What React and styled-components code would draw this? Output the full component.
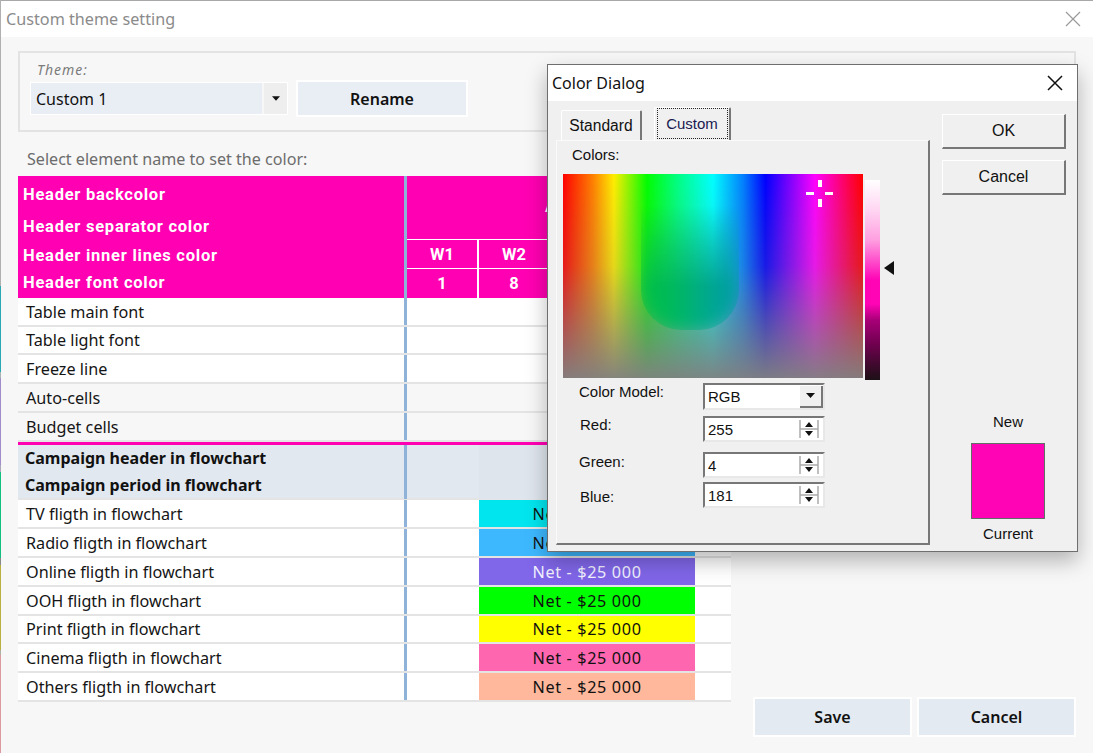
import React from "react";
import styled, { createGlobalStyle } from "styled-components";

const GlobalStyle = createGlobalStyle`
  html, body {
    margin: 0;
    padding: 0;
    background: #f7f7f7;
    overflow: hidden;
  }
  * {
    box-sizing: border-box;
  }
`;

const UI_FONT = `"Noto Sans", "Open Sans", sans-serif`;
const WIN_FONT = `"Liberation Sans", Arial, sans-serif`;

// Main window
const Page = styled.div`
  position: relative;
  display: flex;
  width: 1093px;
  height: 753px;
  background: #f7f7f7;
  font-family: ${UI_FONT};
  overflow: hidden;
`;

const EdgeStrip = styled.div`
  display: flex;
  flex-direction: column;
  width: 1px;
  height: 100%;
`;

const EdgeSegment = styled.div`
  height: ${(props) => props.$h}px;
  background: ${(props) => props.$color};
`;

const Window = styled.div`
  flex: 1;
  display: flex;
  flex-direction: column;
  min-width: 0;
`;

const TitleBar = styled.div`
  display: flex;
  align-items: center;
  justify-content: space-between;
  height: 37px;
  padding: 0 12px 0 5px;
  background: #fff;
  border-top: 1px solid #a8a8a8;
  color: #8b8b8b;
  font-size: 16.2px;
`;

const Body = styled.div`
  flex: 1;
  padding: 14px 17px 16px 17px;
  display: flex;
  flex-direction: column;
`;

const ThemeGroup = styled.div`
  height: 81px;
  border: 2px solid #e3e3e3;
  padding: 8px 0 0 10px;
`;

const ThemeLabel = styled.div`
  margin-left: 7px;
  font-size: 14px;
  line-height: 18px;
  font-style: italic;
  letter-spacing: 1px;
  color: #7c7c7c;
`;

const ThemeControls = styled.div`
  display: flex;
  align-items: center;
  gap: 8px;
  margin-top: 1px;
`;

const Combo = styled.div`
  display: flex;
  gap: 2px;
  width: 258px;
  height: 33px;
  border: 1px solid #fff;
`;

const ComboValue = styled.div`
  flex: 1;
  display: flex;
  align-items: center;
  padding-left: 5px;
  background: #e9eef5;
  color: #111;
  font-size: 16px;
`;

const ComboArrow = styled.div`
  display: flex;
  align-items: center;
  justify-content: center;
  width: 23px;
  background: #eeeeee;
`;

const FlatButton = styled.div`
  display: flex;
  align-items: center;
  justify-content: center;
  width: ${(props) => props.$w}px;
  height: ${(props) => props.$h}px;
  background: ${(props) => props.$bg};
  border: 2px solid #fff;
  color: #111;
  font-size: 16px;
  font-weight: 600;
`;

const Caption = styled.div`
  height: 44px;
  padding: 15px 0 0 9px;
  font-size: 16.1px;
  line-height: 24px;
  color: #6c6c6c;
`;

const BottomArea = styled.div`
  display: flex;
  align-items: flex-end;
  justify-content: space-between;
`;

const Actions = styled.div`
  display: flex;
  gap: 5px;
`;

// Table
const Table = styled.div`
  width: 713px;
  margin-bottom: 35px;
`;

const Header = styled.div`
  display: grid;
  grid-template-columns: 386px 3px 1fr;
  height: 122px;
  background: #ff00b2;
  color: #fff;
`;

const HeaderNames = styled.div`
  display: grid;
  grid-template-rows: 36px 28px 30px 24px;
  padding-left: 5px;
  font-family: Roboto, ${UI_FONT};
  font-size: 16.5px;
  font-weight: 700;
  letter-spacing: 0.75px;
`;

const HeaderName = styled.div`
  display: flex;
  align-items: center;
`;

const Separator = styled.div`
  background: #8fb2d8;
`;

const HeaderGrid = styled.div`
  display: flex;
  flex-direction: column;
`;

const MonthCell = styled.div`
  height: 63px;
  padding: 21px 0 0 138px;
  font-family: Roboto, ${UI_FONT};
  font-size: 16.5px;
  line-height: 20px;
  font-weight: 700;
`;

const WeekRow = styled.div`
  display: grid;
  grid-template-columns: repeat(4, 72px) 1fr;
  height: ${(props) => props.$h}px;
  border-top: 1px solid #fff;
`;

const WeekCell = styled.div`
  display: flex;
  align-items: center;
  justify-content: center;
  border-right: 2px solid #fff;
  font-family: Roboto, ${UI_FONT};
  font-size: 16.5px;
  font-weight: 700;
`;

const Row = styled.div`
  display: grid;
  grid-template-columns: 386px 3px 72px 216px 1fr;
  height: ${(props) => props.$h}px;
  background: ${(props) => props.$bg || "#fff"};
  border-bottom: 2px solid #e4e4e4;
`;

const RowName = styled.div`
  display: flex;
  align-items: center;
  padding-left: 8px;
  color: #151515;
  font-size: 16.2px;
`;

const FlightBar = styled.div`
  display: flex;
  align-items: center;
  justify-content: center;
  background: ${(props) => props.$color || "transparent"};
  color: ${(props) => props.$text || "#111"};
  font-size: 16.2px;
  letter-spacing: 0.65px;
`;

const PinkLine = styled.div`
  height: 3px;
  background: #ff00b2;
`;

const CampaignBlock = styled.div`
  display: grid;
  grid-template-columns: 386px 3px 72px 216px 1fr;
  height: 55px;
  background: #e2e8f0;
  border-bottom: 2px solid #e4e4e4;
`;

const CampaignNames = styled.div`
  display: grid;
  grid-template-rows: 26px 28px;
  padding-left: 7px;
  color: #111;
  font-size: 16px;
  font-weight: 700;
`;

const CampaignName = styled.div`
  display: flex;
  align-items: center;
`;

const CampaignCell = styled.div`
  background: #dfe5ed;
`;

// Color dialog
const Dialog = styled.div`
  position: absolute;
  left: 547px;
  top: 64px;
  width: 531px;
  height: 488px;
  display: flex;
  flex-direction: column;
  background: #f0f0f0;
  border: 1px solid #6e6e6e;
  box-shadow: 0 9px 20px rgba(0, 0, 0, 0.28);
  font-family: ${WIN_FONT};
  color: #111;
`;

const DialogTitle = styled.div`
  display: flex;
  align-items: center;
  justify-content: space-between;
  height: 36px;
  padding: 0 14px 0 4px;
  background: #fff;
  font-family: ${UI_FONT};
  font-size: 16px;
`;

const DialogContent = styled.div`
  flex: 1;
  display: flex;
  gap: 12px;
  padding-left: 8px;
`;

const LeftColumn = styled.div`
  width: 374px;
  display: flex;
  flex-direction: column;
`;

const Tabs = styled.div`
  display: flex;
  align-items: flex-end;
  gap: 12px;
  height: 39px;
  padding-left: 5px;
`;

const Tab = styled.div`
  display: flex;
  align-items: center;
  justify-content: center;
  width: ${(props) => props.$w}px;
  height: ${(props) => props.$h}px;
  border-top: 1px solid #fff;
  border-left: 1px solid #fff;
  border-right: 2px solid #777;
  border-radius: 2px 2px 0 0;
  font-size: 15.6px;
`;

const TabFocus = styled.div`
  display: flex;
  align-items: center;
  justify-content: center;
  width: 71px;
  height: 31px;
  margin-bottom: 1px;
  border: 1px dotted #222;
  color: #1a1a50;
  font-size: 15px;
`;

const Panel = styled.div`
  height: 405px;
  padding: 0 0 0 6px;
  border-top: 1px solid #fafafa;
  border-left: 1px solid #fafafa;
  border-right: 2px solid #777;
  border-bottom: 2px solid #777;
`;

const ColorsLabel = styled.div`
  height: 33px;
  padding: 5px 0 0 9px;
  font-size: 15px;
  line-height: 18px;
`;

const Picker = styled.div`
  display: flex;
  gap: 2px;
  height: 206px;
`;

const Spectrum = styled.div`
  position: relative;
  width: 300px;
  height: 204px;
  overflow: hidden;
  background:
    linear-gradient(to bottom, rgba(128, 128, 128, 0) 0%, rgba(128, 128, 128, 0.2) 45%, rgba(128, 128, 128, 0.62) 75%, rgba(128, 128, 128, 0.96) 100%),
    linear-gradient(to right, #ff0000 0%, #ff8000 10%, #ffee00 17%, #00ff00 28%, #00ff80 38%, #00ffff 50%, #0080ff 60%, #0000ff 67.5%, #ff00ff 84%, #ff0060 94%, #ff0000 100%);
`;

// saturated green-teal tongue hanging down the middle of the palette
const SpectrumTongue = styled.div`
  position: absolute;
  left: 78px;
  top: 10px;
  width: 98px;
  height: 146px;
  border-radius: 0 0 40px 40px;
  background: linear-gradient(to right, #00c040 0%, #00b860 35%, #00a890 70%, #0098a8 100%);
  filter: blur(8px);
  -webkit-mask-image: linear-gradient(to bottom, transparent 15%, #000 70%);
  mask-image: linear-gradient(to bottom, transparent 15%, #000 70%);
`;

const Crosshair = styled.svg`
  position: absolute;
  left: 243px;
  top: 6px;
`;

const LumBar = styled.div`
  width: 15px;
  height: 200px;
  margin-top: 6px;
  background: linear-gradient(
    to bottom,
    #ffffff 0%,
    #ffd6f2 15%,
    #ff9fe0 30%,
    #ff33c4 44%,
    #ff04b5 50%,
    #ff04b5 62%,
    #a80078 70%,
    #70004f 82%,
    #1c1016 100%
  );
`;

const LumArrow = styled.svg`
  align-self: flex-start;
  margin: 87px 0 0 2px;
`;

const FormGrid = styled.div`
  display: grid;
  grid-template-columns: 140px 122px;
  grid-template-rows: 27px 26px 26px 26px;
  row-gap: 6px;
  margin-top: 3px;
`;

const FormLabel = styled.div`
  padding: ${(props) => props.$top}px 0 0 ${(props) => props.$left}px;
  font-size: 15px;
  line-height: 18px;
`;

const Field = styled.div`
  display: flex;
  align-items: center;
  justify-content: space-between;
  margin-top: ${(props) => props.$shift || 0}px;
  height: ${(props) => props.$h || 26}px;
  padding: 0 4px 0 3px;
  background: #fff;
  border-top: 2px solid #777;
  border-left: 2px solid #777;
  border-right: 2px solid #e8e8e8;
  border-bottom: 2px solid #e8e8e8;
  font-size: 15px;
`;

const SelectArrow = styled.div`
  display: flex;
  align-items: center;
  justify-content: center;
  width: 23px;
  height: 22px;
  margin-right: -4px;
  background: #f0f0f0;
  border-right: 2px solid #777;
  border-bottom: 2px solid #777;
`;

const RightColumn = styled.div`
  flex: 1;
  display: flex;
  flex-direction: column;
  padding-top: 13px;
`;

const RaisedButton = styled.div`
  display: flex;
  align-items: center;
  justify-content: center;
  width: 124px;
  height: 35px;
  margin-bottom: 11px;
  border-top: 1px solid #fff;
  border-left: 1px solid #fff;
  border-right: 2px solid #777;
  border-bottom: 2px solid #777;
  font-size: 16px;
`;

const SwatchBlock = styled.div`
  display: flex;
  flex-direction: column;
  align-items: center;
  width: 132px;
  margin-top: 208px;
  font-size: 15px;
  line-height: 16px;
`;

const Swatch = styled.div`
  width: 74px;
  height: 76px;
  margin: 13px 0 7px;
  background: #ff04b5;
  border: 1px solid #5f6f66;
`;

const edgeSegments = [
  { h: 286, color: "#b0b0b0" },
  { h: 86, color: "#2aa9b4" },
  { h: 6, color: "#a8b4b4" },
  { h: 87, color: "#a08cc8" },
  { h: 7, color: "#a8a8b8" },
  { h: 86, color: "#12c080" },
  { h: 7, color: "#888" },
  { h: 85, color: "#b8b040" },
  { h: 5, color: "#b0b0a0" },
  { h: 98, color: "#dc9aa0" },
];

const headerNames = [
  "Header backcolor",
  "Header separator color",
  "Header inner lines color",
  "Header font color",
];

const plainRows = [
  { name: "Table main font", bg: "#fff", h: 29 },
  { name: "Table light font", bg: "#fff", h: 28 },
  { name: "Freeze line", bg: "#fff", h: 29 },
  { name: "Auto-cells", bg: "#f7f7f7", h: 29 },
  { name: "Budget cells", bg: "#f7f7f7", h: 29 },
];

const flights = [
  { name: "TV fligth in flowchart", color: "#00e5ee", h: 29 },
  { name: "Radio fligth in flowchart", color: "#3db8ff", h: 29 },
  { name: "Online fligth in flowchart", color: "#8066e8", text: "#f2f2ff", h: 29 },
  { name: "OOH fligth in flowchart", color: "#00ff00", h: 29 },
  { name: "Print fligth in flowchart", color: "#ffff00", h: 28 },
  { name: "Cinema fligth in flowchart", color: "#ff66b0", h: 29 },
  { name: "Others fligth in flowchart", color: "#ffb89c", h: 29 },
];

function CloseIcon({ size, color, width }) {
  return (
    <svg width={size} height={size} viewBox="0 0 16 16">
      <path d="M1 1 L15 15 M15 1 L1 15" stroke={color} strokeWidth={width} fill="none" />
    </svg>
  );
}

function DownTriangle({ w = 9, h = 5 }) {
  return (
    <svg width={w} height={h} viewBox="0 0 9 5">
      <path d="M0 0 H9 L4.5 5 Z" fill="#111" />
    </svg>
  );
}

function SpinIcon() {
  return (
    <svg width="20" height="18" viewBox="0 0 20 18">
      <path d="M1 0 V18 M19 0 V18 M1 9 H19" stroke="#aaa" strokeWidth="1.5" fill="none" />
      <path d="M10 2 L14 7 H6 Z M10 16 L6 11 H14 Z" fill="#111" />
    </svg>
  );
}

function App() {
  return (
    <Page>
      <GlobalStyle />
      <EdgeStrip>
        {edgeSegments.map((seg, i) => (
          <EdgeSegment key={i} $h={seg.h} $color={seg.color} />
        ))}
      </EdgeStrip>
      <Window>
        <TitleBar>
          Custom theme setting
          <CloseIcon size={16} color="#9a9a9a" width={1.2} />
        </TitleBar>
        <Body>
          <ThemeGroup>
            <ThemeLabel>Theme:</ThemeLabel>
            <ThemeControls>
              <Combo>
                <ComboValue>Custom 1</ComboValue>
                <ComboArrow>
                  <DownTriangle w={8} h={5} />
                </ComboArrow>
              </Combo>
              <FlatButton $w={172} $h={37} $bg="#e9eef5">Rename</FlatButton>
            </ThemeControls>
          </ThemeGroup>
          <Caption>Select element name to set the color:</Caption>
          <BottomArea>
            <Table>
              <Header>
                <HeaderNames>
                  {headerNames.map((name) => (
                    <HeaderName key={name}>{name}</HeaderName>
                  ))}
                </HeaderNames>
                <Separator />
                <HeaderGrid>
                  <MonthCell>April</MonthCell>
                  <WeekRow $h={29}>
                    <WeekCell>W1</WeekCell>
                    <WeekCell>W2</WeekCell>
                    <WeekCell>W3</WeekCell>
                    <WeekCell>W4</WeekCell>
                  </WeekRow>
                  <WeekRow $h={30}>
                    <WeekCell>1</WeekCell>
                    <WeekCell>8</WeekCell>
                    <WeekCell>15</WeekCell>
                    <WeekCell>22</WeekCell>
                  </WeekRow>
                </HeaderGrid>
              </Header>
              {plainRows.map((row) => (
                <Row key={row.name} $bg={row.bg} $h={row.h}>
                  <RowName>{row.name}</RowName>
                  <Separator />
                </Row>
              ))}
              <PinkLine />
              <CampaignBlock>
                <CampaignNames>
                  <CampaignName>Campaign header in flowchart</CampaignName>
                  <CampaignName>Campaign period in flowchart</CampaignName>
                </CampaignNames>
                <Separator />
                <div />
                <CampaignCell />
              </CampaignBlock>
              {flights.map((row) => (
                <Row key={row.name} $h={row.h}>
                  <RowName>{row.name}</RowName>
                  <Separator />
                  <div />
                  <FlightBar $color={row.color} $text={row.text}>Net - $25 000</FlightBar>
                </Row>
              ))}
            </Table>
            <Actions>
              <FlatButton $w={159} $h={40} $bg="#e4eaf2">Save</FlatButton>
              <FlatButton $w={159} $h={40} $bg="#e4eaf2">Cancel</FlatButton>
            </Actions>
          </BottomArea>
        </Body>
      </Window>

      <Dialog>
        <DialogTitle>
          Color Dialog
          <CloseIcon size={16} color="#111" width={1.5} />
        </DialogTitle>
        <DialogContent>
          <LeftColumn>
            <Tabs>
              <Tab $w={81} $h={30}>Standard</Tab>
              <Tab $w={77} $h={33}>
                <TabFocus>Custom</TabFocus>
              </Tab>
            </Tabs>
            <Panel>
              <ColorsLabel>Colors:</ColorsLabel>
              <Picker>
                <Spectrum>
                  <SpectrumTongue />
                  <Crosshair width="28" height="28" viewBox="0 0 28 28">
                    <path d="M12 0 H16 V7 H12 Z M12 19 H16 V27 H12 Z M0 12 H8 V15 H0 Z M19 12 H27 V15 H19 Z" fill="#fff" />
                  </Crosshair>
                </Spectrum>
                <LumBar />
                <LumArrow width="11" height="14" viewBox="0 0 11 14">
                  <path d="M0 7 L10 0 V14 Z" fill="#111" />
                </LumArrow>
              </Picker>
              <FormGrid>
                <FormLabel $top={0} $left={16}>Color Model:</FormLabel>
                <Field $h={27}>
                  RGB
                  <SelectArrow>
                    <DownTriangle />
                  </SelectArrow>
                </Field>
                <FormLabel $top={0} $left={17}>Red:</FormLabel>
                <Field>255<SpinIcon /></Field>
                <FormLabel $top={5} $left={16}>Green:</FormLabel>
                <Field $shift={4}>4<SpinIcon /></Field>
                <FormLabel $top={8} $left={17}>Blue:</FormLabel>
                <Field $shift={2}>181<SpinIcon /></Field>
              </FormGrid>
            </Panel>
          </LeftColumn>
          <RightColumn>
            <RaisedButton>OK</RaisedButton>
            <RaisedButton>Cancel</RaisedButton>
            <SwatchBlock>
              <span>New</span>
              <Swatch />
              <span>Current</span>
            </SwatchBlock>
          </RightColumn>
        </DialogContent>
      </Dialog>
    </Page>
  );
}

export default App;
